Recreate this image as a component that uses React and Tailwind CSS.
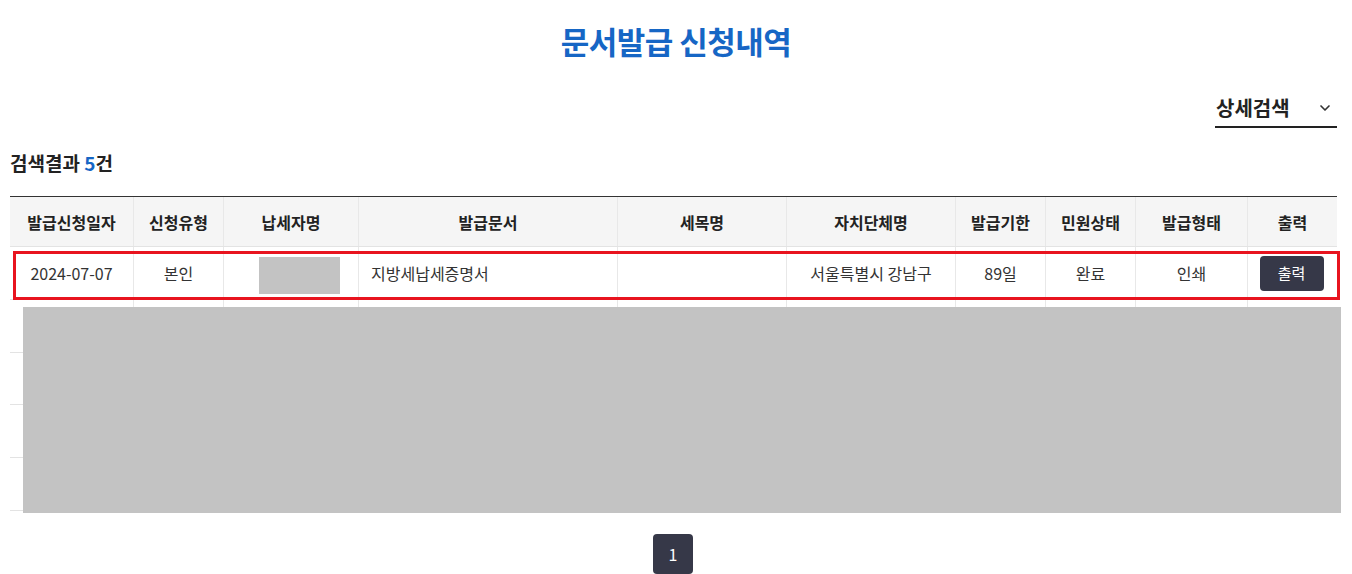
import React from "react";

const cols = [
  { w: "w-[123px]", h: "발급신청일자" },
  { w: "w-[90px]", h: "신청유형" },
  { w: "w-[135px]", h: "납세자명" },
  { w: "w-[259px]", h: "발급문서" },
  { w: "w-[169px]", h: "세목명" },
  { w: "w-[169px]", h: "자치단체명" },
  { w: "w-[90px]", h: "발급기한" },
  { w: "w-[90px]", h: "민원상태" },
  { w: "w-[112px]", h: "발급형태" },
  { w: "w-[90px]", h: "출력" },
];

function Row({ first, h }) {
  return (
    <div className={`flex ${h} border-b border-[#e3e3e3] text-[16px] text-[#333]`}>
      {cols.map((c, i) => (
        <div
          key={i}
          className={`${c.w} shrink-0 flex items-center ${i === 3 ? "justify-start pl-[12px]" : "justify-center"} ${i > 0 ? "border-l border-[#e8e8e8]" : ""}`}
        >
          {first && i === 0 && "2024-07-07"}
          {first && i === 1 && "본인"}
          {first && i === 2 && <div className="w-[81px] h-[37px] ml-[16px] mt-[4px] bg-[#c3c3c3]" />}
          {first && i === 3 && "지방세납세증명서"}
          {first && i === 5 && "서울특별시 강남구"}
          {first && i === 6 && "89일"}
          {first && i === 7 && "완료"}
          {first && i === 8 && "인쇄"}
          {i === 9 && (
            <div className="w-[64px] h-[35px] mr-[2px] rounded-[4px] bg-[#363848] text-white text-[15px] flex items-center justify-center">
              출력
            </div>
          )}
        </div>
      ))}
    </div>
  );
}

export default function App() {
  return (
    <div
      className="w-[1352px] h-[574px] overflow-hidden bg-white relative"
      style={{ fontFamily: '"Noto Sans CJK KR", "Noto Sans", sans-serif' }}
    >
      <div className="pt-[21px] h-[61px] text-center">
        <h1 className="text-[31px] leading-[40px] font-bold text-[#1666c5] tracking-[-0.5px]">
          문서발급 신청내역
        </h1>
      </div>
      <div className="flex justify-end pr-[15px] pt-[33px]">
        <div className="w-[122px] flex items-center justify-between border-b-2 border-[#222] pb-[5px] pl-[1px] pr-[4px]">
          <span className="text-[20px] leading-[27px] font-bold text-[#222]">상세검색</span>
          <svg width="16" height="16" viewBox="0 0 24 24" fill="none" stroke="#333" strokeWidth="2.5" strokeLinecap="round" strokeLinejoin="round">
            <path d="M6 9l6 6 6-6" />
          </svg>
        </div>
      </div>
      <div className="pl-[10px] pt-[22px] text-[19px] leading-[26px] font-bold text-[#222]">
        검색결과 <span className="text-[#1666c5]">5</span>건
      </div>
      <div className="ml-[10px] mt-[20px] w-[1327px] border-t border-[#333] relative">
        <div className="flex h-[50px] bg-[#f5f5f5] border-b border-[#e3e3e3] text-[16px] font-bold text-[#222]">
          {cols.map((c, i) => (
            <div key={i} className={`${c.w} shrink-0 flex items-center justify-center ${i > 0 ? "border-l border-[#e8e8e8]" : ""}`}>
              {c.h}
            </div>
          ))}
        </div>
        <Row first h="h-[53px]" />
        <Row h="h-[53px]" />
        <Row h="h-[52px]" />
        <Row h="h-[53px]" />
        <Row h="h-[53px]" />
        <div className="absolute left-[3px] top-[54px] w-[1327px] h-[49px] border-[3px] border-[#e8141f]" />
        <div className="absolute left-[13px] top-[110px] w-[1318px] h-[206px] bg-[#c3c3c3]" />
      </div>
      <div className="flex justify-center mt-[23px] pr-[6px]">
        <div className="w-[40px] h-[40px] rounded-[4px] bg-[#363848] text-white text-[16px] flex items-center justify-center">
          1
        </div>
      </div>
    </div>
  );
}
